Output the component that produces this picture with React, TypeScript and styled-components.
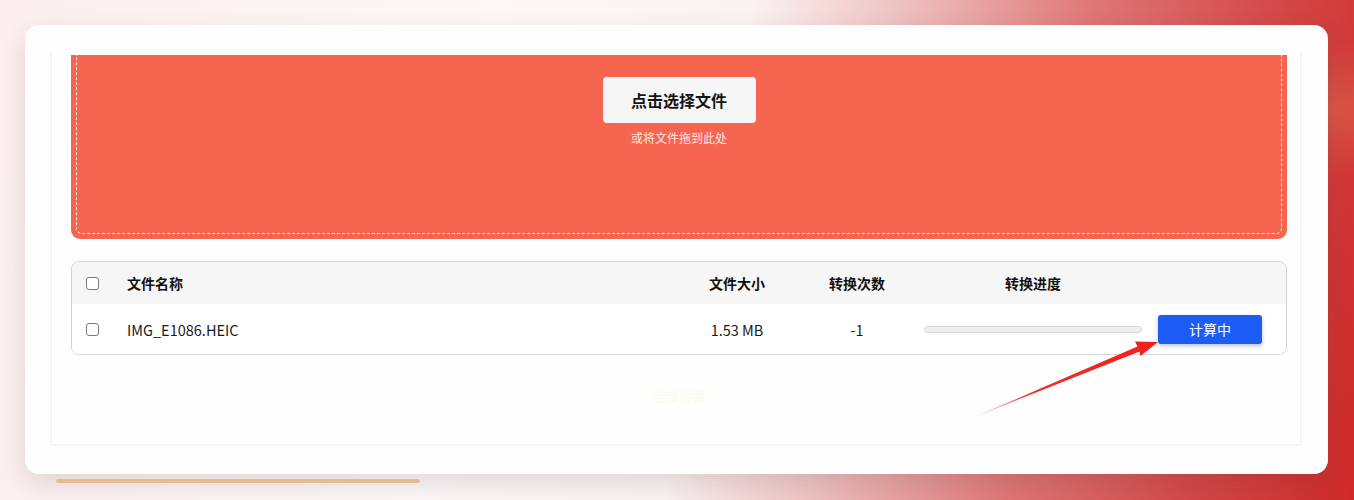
import React from "react";
import styled, { createGlobalStyle } from "styled-components";

const GlobalStyle = createGlobalStyle`
  html, body {
    margin: 0;
    padding: 0;
  }
  body {
    font-family: "Noto Sans CJK SC", "Noto Sans", sans-serif;
    color: #111;
  }
  * {
    box-sizing: border-box;
  }
`;

type FileRow = {
  name: string;
  size: string;
  count: number;
  progress: number;
};

const files: FileRow[] = [
  { name: "IMG_E1086.HEIC", size: "1.53 MB", count: -1, progress: 0 },
];

export default function App() {
  return (
    <Page>
      <GlobalStyle />
      <Card>
        <Panel>
          <DropZone>
            <DashedArea>
              <PickButton>点击选择文件</PickButton>
              <DropHint>或将文件拖到此处</DropHint>
            </DashedArea>
          </DropZone>

          <Table>
            <HeaderRow>
              <CheckCell>
                <Check type="checkbox" />
              </CheckCell>
              <NameCell>文件名称</NameCell>
              <CenterCell>文件大小</CenterCell>
              <CenterCell>转换次数</CenterCell>
              <CenterCell>转换进度</CenterCell>
              <div />
            </HeaderRow>
            {files.map((file) => (
              <BodyRow key={file.name}>
                <CheckCell>
                  <Check type="checkbox" />
                </CheckCell>
                <NameCell>{file.name}</NameCell>
                <CenterCell>{file.size}</CenterCell>
                <CenterCell>{file.count}</CenterCell>
                <ProgressCell>
                  <ProgressTrack>
                    <ProgressFill style={{ width: `${file.progress}%` }} />
                  </ProgressTrack>
                </ProgressCell>
                <ActionCell>
                  <BusyButton>计算中</BusyButton>
                </ActionCell>
              </BodyRow>
            ))}
          </Table>

          <Footer>
            <GhostButton>全部转换</GhostButton>
          </Footer>
        </Panel>
      </Card>
      <AccentBar />

      <Annotation width="1354" height="500" viewBox="0 0 1354 500">
        <defs>
          <linearGradient id="arrowFade" x1="972" y1="418" x2="1158" y2="342" gradientUnits="userSpaceOnUse">
            <stop offset="0" stopColor="#f04a3a" stopOpacity="0.3" />
            <stop offset="0.35" stopColor="#f0302a" />
            <stop offset="1" stopColor="#f21d1d" />
          </linearGradient>
        </defs>
        <polygon
          points="972,418 1139.5,351.5 1140.5,356 1158,342 1135,341.5 1137.5,346.5"
          fill="url(#arrowFade)"
        />
      </Annotation>
    </Page>
  );
}

const Page = styled.div`
  position: relative;
  width: 1354px;
  height: 500px;
  overflow: hidden;
  padding: 25px 26px 0 25px;
  background:
    radial-gradient(ellipse 90px 70px at 1335px 110px, rgba(222, 110, 80, 0.55), transparent),
    linear-gradient(
      100deg,
      #fcefee 0%,
      #fdf8f8 35%,
      #fbf3f3 52%,
      #efc4c4 62%,
      #de7676 76%,
      #d44a4a 88%,
      #cf2a2a 100%
    );
`;

const Card = styled.div`
  height: 449px;
  background: #fefefe;
  border-radius: 14px;
  padding: 27px 26px 0 25px;
  box-shadow: 0 10px 26px rgba(60, 40, 40, 0.14);
`;

const Panel = styled.div`
  height: 394px;
  overflow: hidden;
  border: 2px solid #f7f6f6;
  border-top: none;
  padding: 3px 13px 0 19px;
  display: flex;
  flex-direction: column;
`;

const DropZone = styled.div`
  height: 184px;
  background: #f6654f;
  border-radius: 0 0 9px 9px;
  padding: 0 5px 5px 5px;
  display: flex;
`;

const DashedArea = styled.div`
  flex: 1;
  border: 1px dashed rgba(255, 255, 255, 0.85);
  border-top: none;
  border-radius: 0 0 6px 6px;
  display: flex;
  flex-direction: column;
  align-items: center;
  padding-top: 22px;
`;

const PickButton = styled.button`
  width: 153px;
  height: 46px;
  border: none;
  border-radius: 4px;
  background: #f6f6f6;
  font-family: "Noto Sans CJK SC", sans-serif;
  font-size: 16px;
  font-weight: 700;
  color: #151515;
  cursor: pointer;
`;

const DropHint = styled.div`
  margin-top: 6px;
  font-size: 12px;
  color: #fde9e4;
  line-height: 17px;
`;

const Table = styled.div`
  margin-top: 22px;
  border: 1px solid #d4d4d4;
  border-radius: 8px;
  overflow: hidden;
`;

const rowColumns = "55px 1fr 120px 120px 232px 137px";

const HeaderRow = styled.div`
  display: grid;
  grid-template-columns: ${rowColumns};
  align-items: center;
  height: 42px;
  background: #f6f6f6;
  font-size: 14px;
  font-weight: 700;
  color: #111;
`;

const BodyRow = styled.div`
  display: grid;
  grid-template-columns: ${rowColumns};
  align-items: center;
  height: 50px;
  background: #fff;
  font-size: 14.5px;
  color: #1a1a1a;
`;

const CheckCell = styled.div`
  display: flex;
  align-items: center;
  padding-left: 14px;
`;

const Check = styled.input`
  appearance: none;
  width: 13px;
  height: 13px;
  margin: 0;
  border: 1.5px solid #7a7a7a;
  border-radius: 3px;
  background: #fff;
`;

const NameCell = styled.div`
  padding-left: 0;
`;

const CenterCell = styled.div`
  text-align: center;
`;

const ProgressCell = styled.div`
  padding: 0 7px;
`;

const ProgressTrack = styled.div`
  height: 7px;
  border: 1px solid #d6d6d6;
  border-radius: 4px;
  background: #efefef;
  overflow: hidden;
`;

const ProgressFill = styled.div`
  height: 100%;
  background: #1d5cf5;
`;

const ActionCell = styled.div`
  padding-left: 9px;
`;

const BusyButton = styled.button`
  width: 104px;
  height: 29px;
  border: none;
  border-radius: 3px;
  background: #1d5df6;
  color: #fff;
  font-family: "Noto Sans CJK SC", sans-serif;
  font-size: 14px;
  box-shadow: 0 2px 4px rgba(30, 60, 140, 0.3);
`;

const Footer = styled.div`
  display: flex;
  justify-content: center;
  padding-top: 33px;
`;

const GhostButton = styled.div`
  padding: 0 12px;
  height: 16px;
  line-height: 16px;
  font-size: 13px;
  color: #fbfaee;
  background: #fefefb;
`;

const AccentBar = styled.div`
  margin: 5px 0 0 31px;
  width: 364px;
  height: 4px;
  border-radius: 2px;
  background: #e9b990;
`;

const Annotation = styled.svg`
  position: absolute;
  top: 0;
  left: 0;
  pointer-events: none;
`;
